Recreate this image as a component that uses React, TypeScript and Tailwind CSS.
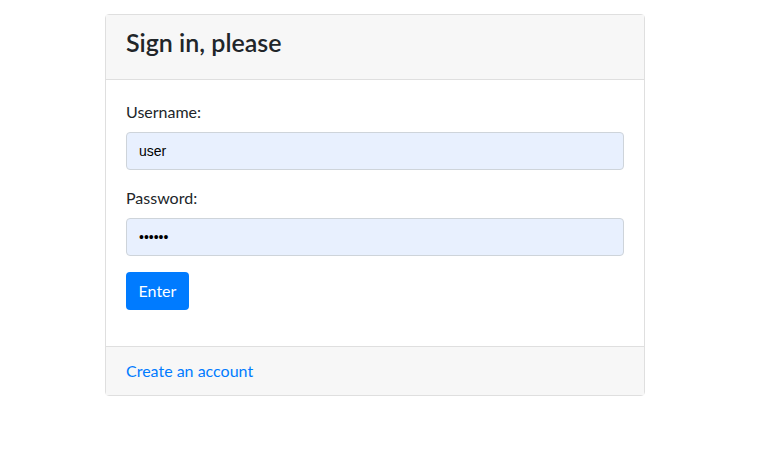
export default function App() {
  return (
    <div className="min-h-screen bg-white px-[105px] pt-[14px] font-['Lato',sans-serif] text-[#212529]">
      <div className="w-[540px] rounded-[4px] border border-[#dfdfdf] bg-white">
        <div className="flex h-[65px] items-center border-b border-[#dfdfdf] bg-[#f7f7f7] px-5 pb-[8px]">
          <h3 className="text-[25px] font-semibold leading-tight">Sign in, please</h3>
        </div>
        <form className="p-5" onSubmit={(e) => e.preventDefault()}>
          <div className="mb-4">
            <label className="mb-2 block text-base leading-6">Username:</label>
            <input
              className="block h-[38px] w-full rounded-[4px] border border-[#ced4da] bg-[#e8f0fe] px-3 font-['Liberation_Sans',sans-serif] text-[14px] text-black outline-none"
              defaultValue="user"
            />
          </div>
          <div className="mb-4">
            <label className="mb-2 block text-base leading-6">Password:</label>
            <input
              type="password"
              className="block h-[38px] w-full rounded-[4px] border border-[#ced4da] bg-[#e8f0fe] px-3 font-['Liberation_Sans',sans-serif] text-[14px] text-black outline-none"
              defaultValue="secret"
            />
          </div>
          <div className="mb-4">
            <button className="h-[38px] w-[63px] rounded-[4px] bg-[#007bff] text-base text-white">Enter</button>
          </div>
        </form>
        <div className="border-t border-[#dfdfdf] bg-[#f7f7f7] px-5 py-3 leading-6">
          <a href="#" className="text-base text-[#007bff]">Create an account</a>
        </div>
      </div>
    </div>
  );
}
